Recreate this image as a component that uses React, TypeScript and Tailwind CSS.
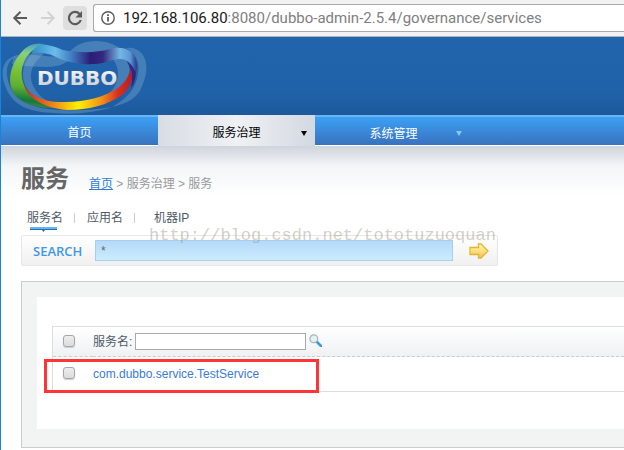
import { useState } from 'react';

const tabs = [
  { id: 'name', label: '服务名', className: 'w-[60px]' },
  { id: 'app', label: '应用名', className: 'w-[60px]' },
  { id: 'ip', label: '机器IP', className: 'pl-[7px]' },
];

const services = ['com.dubbo.service.TestService'];

function BrowserBar() {
  return (
    <div className="flex h-[37px] items-center border-b border-[#b4b4b4] bg-[#f2f2f2] pl-[8px]">
      <button type="button" aria-label="Back" className="flex h-6 w-[22px] items-center justify-center">
        <svg width="16" height="16" viewBox="0 0 16 16" fill="none" stroke="#5a5a5a" strokeWidth="2">
          <path d="M15 8H3M8.5 1.8L2.3 8l6.2 6.2" />
        </svg>
      </button>
      <button type="button" aria-label="Forward" className="ml-[6px] flex h-6 w-[22px] items-center justify-center">
        <svg width="16" height="16" viewBox="0 0 16 16" fill="none" stroke="#d2d2d2" strokeWidth="2">
          <path d="M1 8h12M7.5 1.8L13.7 8l-6.2 6.2" />
        </svg>
      </button>
      <button type="button" aria-label="Reload" className="ml-[4px] flex h-6 w-6 items-center justify-center rounded-sm bg-[#dedede]">
        <svg width="16" height="16" viewBox="0 0 16 16" fill="none">
          <path d="M13.8 10A6.1 6.1 0 1 1 12.6 4" stroke="#5a5a5a" strokeWidth="2.2" />
          <path d="M15 1v6.6H8.4z" fill="#5a5a5a" />
        </svg>
      </button>
      <div className="ml-[6px] flex h-7 min-w-0 flex-1 items-center rounded-l-[3px] border border-r-0 border-[#a9a9a9] bg-white pl-[7px]">
        <svg width="14" height="14" viewBox="0 0 14 14" fill="none" className="shrink-0">
          <circle cx="7" cy="7" r="6.2" stroke="#5a5a5a" strokeWidth="1.4" />
          <path d="M7 6v4.6M7 3.2v1.7" stroke="#5a5a5a" strokeWidth="1.8" />
        </svg>
        <span className="ml-[8px] whitespace-nowrap font-['Roboto',sans-serif] text-[15px] leading-5 text-[#808080]">
          <span className="text-[#1a1a1a]">192.168.106.80</span>:8080/dubbo-admin-2.5.4/governance/services
        </span>
      </div>
    </div>
  );
}

function Logo() {
  return (
    <svg width="150" height="78" viewBox="1 37 150 78" role="img" aria-label="DUBBO">
      <defs>
        <linearGradient id="green" x1="0.6" y1="0" x2="0.5" y2="1">
          <stop offset="0" stopColor="#3f9ccc" />
          <stop offset="0.18" stopColor="#8ccf7a" />
          <stop offset="0.5" stopColor="#76c02f" />
          <stop offset="0.7" stopColor="#5fae33" />
          <stop offset="0.9" stopColor="#127a3c" />
          <stop offset="1" stopColor="#4f8a3c" />
        </linearGradient>
        <linearGradient id="top" x1="0" y1="0" x2="1" y2="0">
          <stop offset="0" stopColor="#2c8fc8" />
          <stop offset="0.22" stopColor="#6cbcea" />
          <stop offset="0.38" stopColor="#3f7cc0" />
          <stop offset="0.56" stopColor="#2b1c78" />
          <stop offset="0.68" stopColor="#33297f" />
          <stop offset="0.84" stopColor="#74b7e6" />
          <stop offset="0.94" stopColor="#5a97d4" />
          <stop offset="1" stopColor="#31368a" />
        </linearGradient>
        <linearGradient id="side" x1="0" y1="0" x2="0" y2="1">
          <stop offset="0" stopColor="#5a97d4" />
          <stop offset="0.4" stopColor="#312a80" />
          <stop offset="1" stopColor="#27247c" />
        </linearGradient>
        <linearGradient id="fire" x1="0" y1="0" x2="1" y2="0">
          <stop offset="0" stopColor="#c8232a" />
          <stop offset="0.25" stopColor="#ef7d1a" />
          <stop offset="0.5" stopColor="#fff000" />
          <stop offset="0.72" stopColor="#f0901c" />
          <stop offset="0.87" stopColor="#d8301e" />
          <stop offset="1" stopColor="#b81c24" />
        </linearGradient>
        <linearGradient id="silver" x1="0" y1="0" x2="0" y2="1">
          <stop offset="0" stopColor="#ffffff" />
          <stop offset="1" stopColor="#c3c7cc" />
        </linearGradient>
      </defs>
      <g fill="#a5c8dc" fillOpacity="0.28">
        <path d="M36 50C16 66 20 90 42 104L56 106C26 92 24 68 44 54Z" />
        <path d="M112 58C122 70 120 86 104 98L112 96C132 82 132 66 126 54Z" />
        <path d="M70 52C80 38 110 37 124 52L116 50C106 54 88 56 70 52Z" />
        <path d="M126 48C144 46 152 64 142 86C138 98 128 103 112 107C128 98 136 88 138 74C140 62 136 54 126 48Z" />
        <path d="M14 56C28 52 44 58 58 56L68 61C56 70 38 66 24 66L12 64Z" />
        <path d="M16 56C2 58 -1 74 7 90C14 106 30 112 54 113C76 115 98 112 112 107C90 111 66 111 48 109C26 106 14 98 9 84C5 72 6 62 16 56Z" />
      </g>
      <path d="M126 50C134 53 138 62 136 72C136 78 134 84 131 88C133 80 132 70 127 62Z" fill="url(#side)" />
      <path d="M34 45C43 43 54 46 63 50C80 53 96 53 110 49C120 46 130 49 134 55C137 60 137 66 136 72C132 66 130 60 121 59C114 58 106 64 92 64C80 65 68 62 60 59C51 54 44 52 32 53Z" fill="url(#top)" />
      <path d="M44 44C34 42 26 46 20 54C10 66 8 80 12 90C18 103 36 109 60 108C44 104 30 96 25 87C19 75 21 60 33 50C36 47 40 45 44 44Z" fill="url(#green)" />
      <path d="M24 85C30 95 42 102 60 102C84 103 104 97 118 88C126 82 129 75 131 69C134 80 130 88 122 95C108 105 88 110 68 110C48 109 28 100 24 85Z" fill="url(#fire)" />
      <text x="37" y="85" fill="url(#silver)" className="font-['DejaVu_Sans',sans-serif] text-[20px] font-bold">DUBBO</text>
    </svg>
  );
}

function NavBar() {
  return (
    <nav className="flex h-[31px] border-b border-white bg-[#3875c0] text-white">
      <a href="#home" className="flex h-[30px] w-[157px] items-center justify-center border-t-2 border-[#68b4f4] bg-linear-to-b from-[#3ba0f5] to-[#3872be] pt-[3px]">首页</a>
      <a href="#governance" className="grid h-[31px] w-[157px] grid-cols-[1fr_auto_1fr] items-center bg-linear-to-r from-[#d8dde4] via-[#eff1f4] to-[#d3d9e1] pt-[5px] text-black">
        <span className="col-start-2">服务治理</span>
        <svg width="6" height="5" viewBox="0 0 6 5" className="mr-[8px] justify-self-end">
          <path d="M0 0h6L3 5z" fill="#000" />
        </svg>
      </a>
      <div className="h-[30px] flex-1 border-t-2 border-[#68b4f4] bg-linear-to-b from-[#3ba0f5] to-[#3872be]">
        <a href="#system" className="grid h-7 w-[157px] grid-cols-[1fr_auto_1fr] items-center pt-[5px]">
          <span className="col-start-2">系统管理</span>
          <svg width="6" height="5" viewBox="0 0 6 5" className="mr-[10px] justify-self-end">
            <path d="M0 0h6L3 5z" fill="#86c8fb" />
          </svg>
        </a>
      </div>
    </nav>
  );
}

function SearchBox() {
  const [keyword, setKeyword] = useState('*');

  return (
    <form className="relative flex h-[31px] max-w-[477px] items-center rounded-xs border border-[#e6e7e9] bg-linear-to-b from-white to-[#f0f0f0] pl-[11px]">
      <label htmlFor="keyword" className="w-[62px] font-['Open_Sans',sans-serif] text-[13px] font-semibold text-[#3f97e6]">SEARCH</label>
      <input
        id="keyword"
        value={keyword}
        onChange={e => setKeyword(e.target.value)}
        className="h-[21px] min-w-0 flex-1 border border-[#a9cdea] bg-linear-to-b from-[#b4dafa] to-[#cbecfd] px-[5px] text-[12px] text-[#666] outline-none"
      />
      <button type="button" aria-label="Search" className="flex w-[44px] items-center justify-center pl-[7px]">
        <svg width="20" height="16" viewBox="0 0 20 16">
          <defs>
            <linearGradient id="arrow" x1="0" y1="0" x2="0" y2="1">
              <stop offset="0" stopColor="#fff9b8" />
              <stop offset="0.5" stopColor="#ffe07c" />
              <stop offset="1" stopColor="#ffb66a" />
            </linearGradient>
          </defs>
          <path d="M1 4.5h8.5V1H12l7 7-7 7H9.5v-3.5H1z" fill="url(#arrow)" stroke="#e3b62f" strokeWidth="1.3" />
        </svg>
      </button>
      <span className="pointer-events-none absolute -top-3 left-[127px] whitespace-nowrap font-['Liberation_Mono',monospace] text-[17px] leading-6 text-[#8c8670]/40">
        http://blog.csdn.net/tototuzuoquan
      </span>
    </form>
  );
}

function CheckBox({ label }: { label: string }) {
  return (
    <input
      type="checkbox"
      aria-label={label}
      className="block size-3 appearance-none rounded-[3px] border border-[#a6a6a6] bg-linear-to-b from-[#ededed] to-[#dcdcdc] shadow-[0_1px_1px_#ccc] checked:bg-[#4a90d9]"
    />
  );
}

function ServiceTable() {
  return (
    <div className="relative">
      <table className="w-full border-separate border-spacing-0 border border-r-0 border-[#dddddd] text-left">
        <thead>
          <tr className="h-[30px] bg-linear-to-b from-white to-[#eff0f3]">
            <th className="w-[40px] border-b border-dashed border-[#cccccc] pb-[2px] pl-[10px]">
              <CheckBox label="全选" />
            </th>
            <th className="border-b border-dashed border-[#cccccc] font-normal">
              <div className="flex items-center">
                <label htmlFor="filter" className="w-[42px] whitespace-nowrap">服务名:</label>
                <input id="filter" className="h-[17px] w-[171px] border border-[#a9a9a9] bg-white px-1 outline-none" />
                <button type="button" aria-label="筛选" className="ml-[3px] pb-[3px]">
                  <svg width="13" height="13" viewBox="0 0 13 13" fill="none">
                    <path d="M8 8l4 4" stroke="#3d9be0" strokeWidth="2.6" strokeLinecap="round" />
                    <circle cx="4.8" cy="4.8" r="3.9" fill="#e4f1f3" stroke="#a7b5b6" strokeWidth="1.2" />
                  </svg>
                </button>
              </div>
            </th>
          </tr>
        </thead>
        <tbody>
          {services.map(s => (
            <tr key={s} className="h-[34px]">
              <td className="pb-[2px] pl-[10px]"><CheckBox label={s} /></td>
              <td><a href="#service" className="text-[#3a7bd5]">{s}</a></td>
            </tr>
          ))}
        </tbody>
      </table>
      <div className="pointer-events-none absolute -left-2 top-[33px] h-[34px] w-[275px] border-3 border-[#fd3537]" />
    </div>
  );
}

export default function App() {
  const [active, setActive] = useState('name');

  return (
    <div className="min-h-screen overflow-hidden border-l border-[#1b82d9] bg-white font-['Liberation_Sans','Noto_Sans_CJK_SC',sans-serif] text-[12px] leading-4 text-[#4e5a69]">
      <BrowserBar />
      <header className="h-[78px] bg-linear-to-b from-[#2164ac] via-[#2062a9] via-70% to-[#1c599c]">
        <Logo />
      </header>
      <NavBar />
      <main className="bg-linear-to-b from-[#cfd4dc] via-[#f3f5f7] via-[20px] to-white to-[50px] pl-5 pt-[17px]">
        <div className="flex h-8 items-center">
          <h1 className="w-[68px] text-[24px] font-bold leading-8 text-[#666]">服务</h1>
          <div className="pt-[10px] text-[#999]">
            <a href="#home" className="text-[#2f7bd8] underline">首页</a> &gt; 服务治理 &gt; 服务
          </div>
        </div>
        <div className="mt-[15px] flex h-[25px] items-start pl-[6px]">
          {tabs.map((t, i) => (
            <div key={t.id} className={t.className}>
              <div className="flex items-center">
                <button type="button" onClick={() => setActive(t.id)} className="whitespace-nowrap">{t.label}</button>
                {i < tabs.length - 1 && <span className="ml-[11px] h-[10px] w-px bg-[#ccc]" />}
              </div>
              {active === t.id && (
                <svg width="27" height="5" viewBox="0 0 27 5" className="ml-[3px] mt-px block">
                  <path d="M0 0h27v2H0z" fill="#65b5f6" />
                  <path d="M0 2h27v1H15l-1.500 2L12 3H0z" fill="#2b6fae" />
                </svg>
              )}
            </div>
          ))}
        </div>
        <SearchBox />
        <section className="mt-[15px] border border-r-0 border-[#cacccb] bg-[#f2f4f4] pb-[18px] pl-[15px] pt-[15px]">
          <div className="bg-white pb-[37px] pl-[15px] pt-[29px]">
            <ServiceTable />
          </div>
        </section>
      </main>
    </div>
  );
}
